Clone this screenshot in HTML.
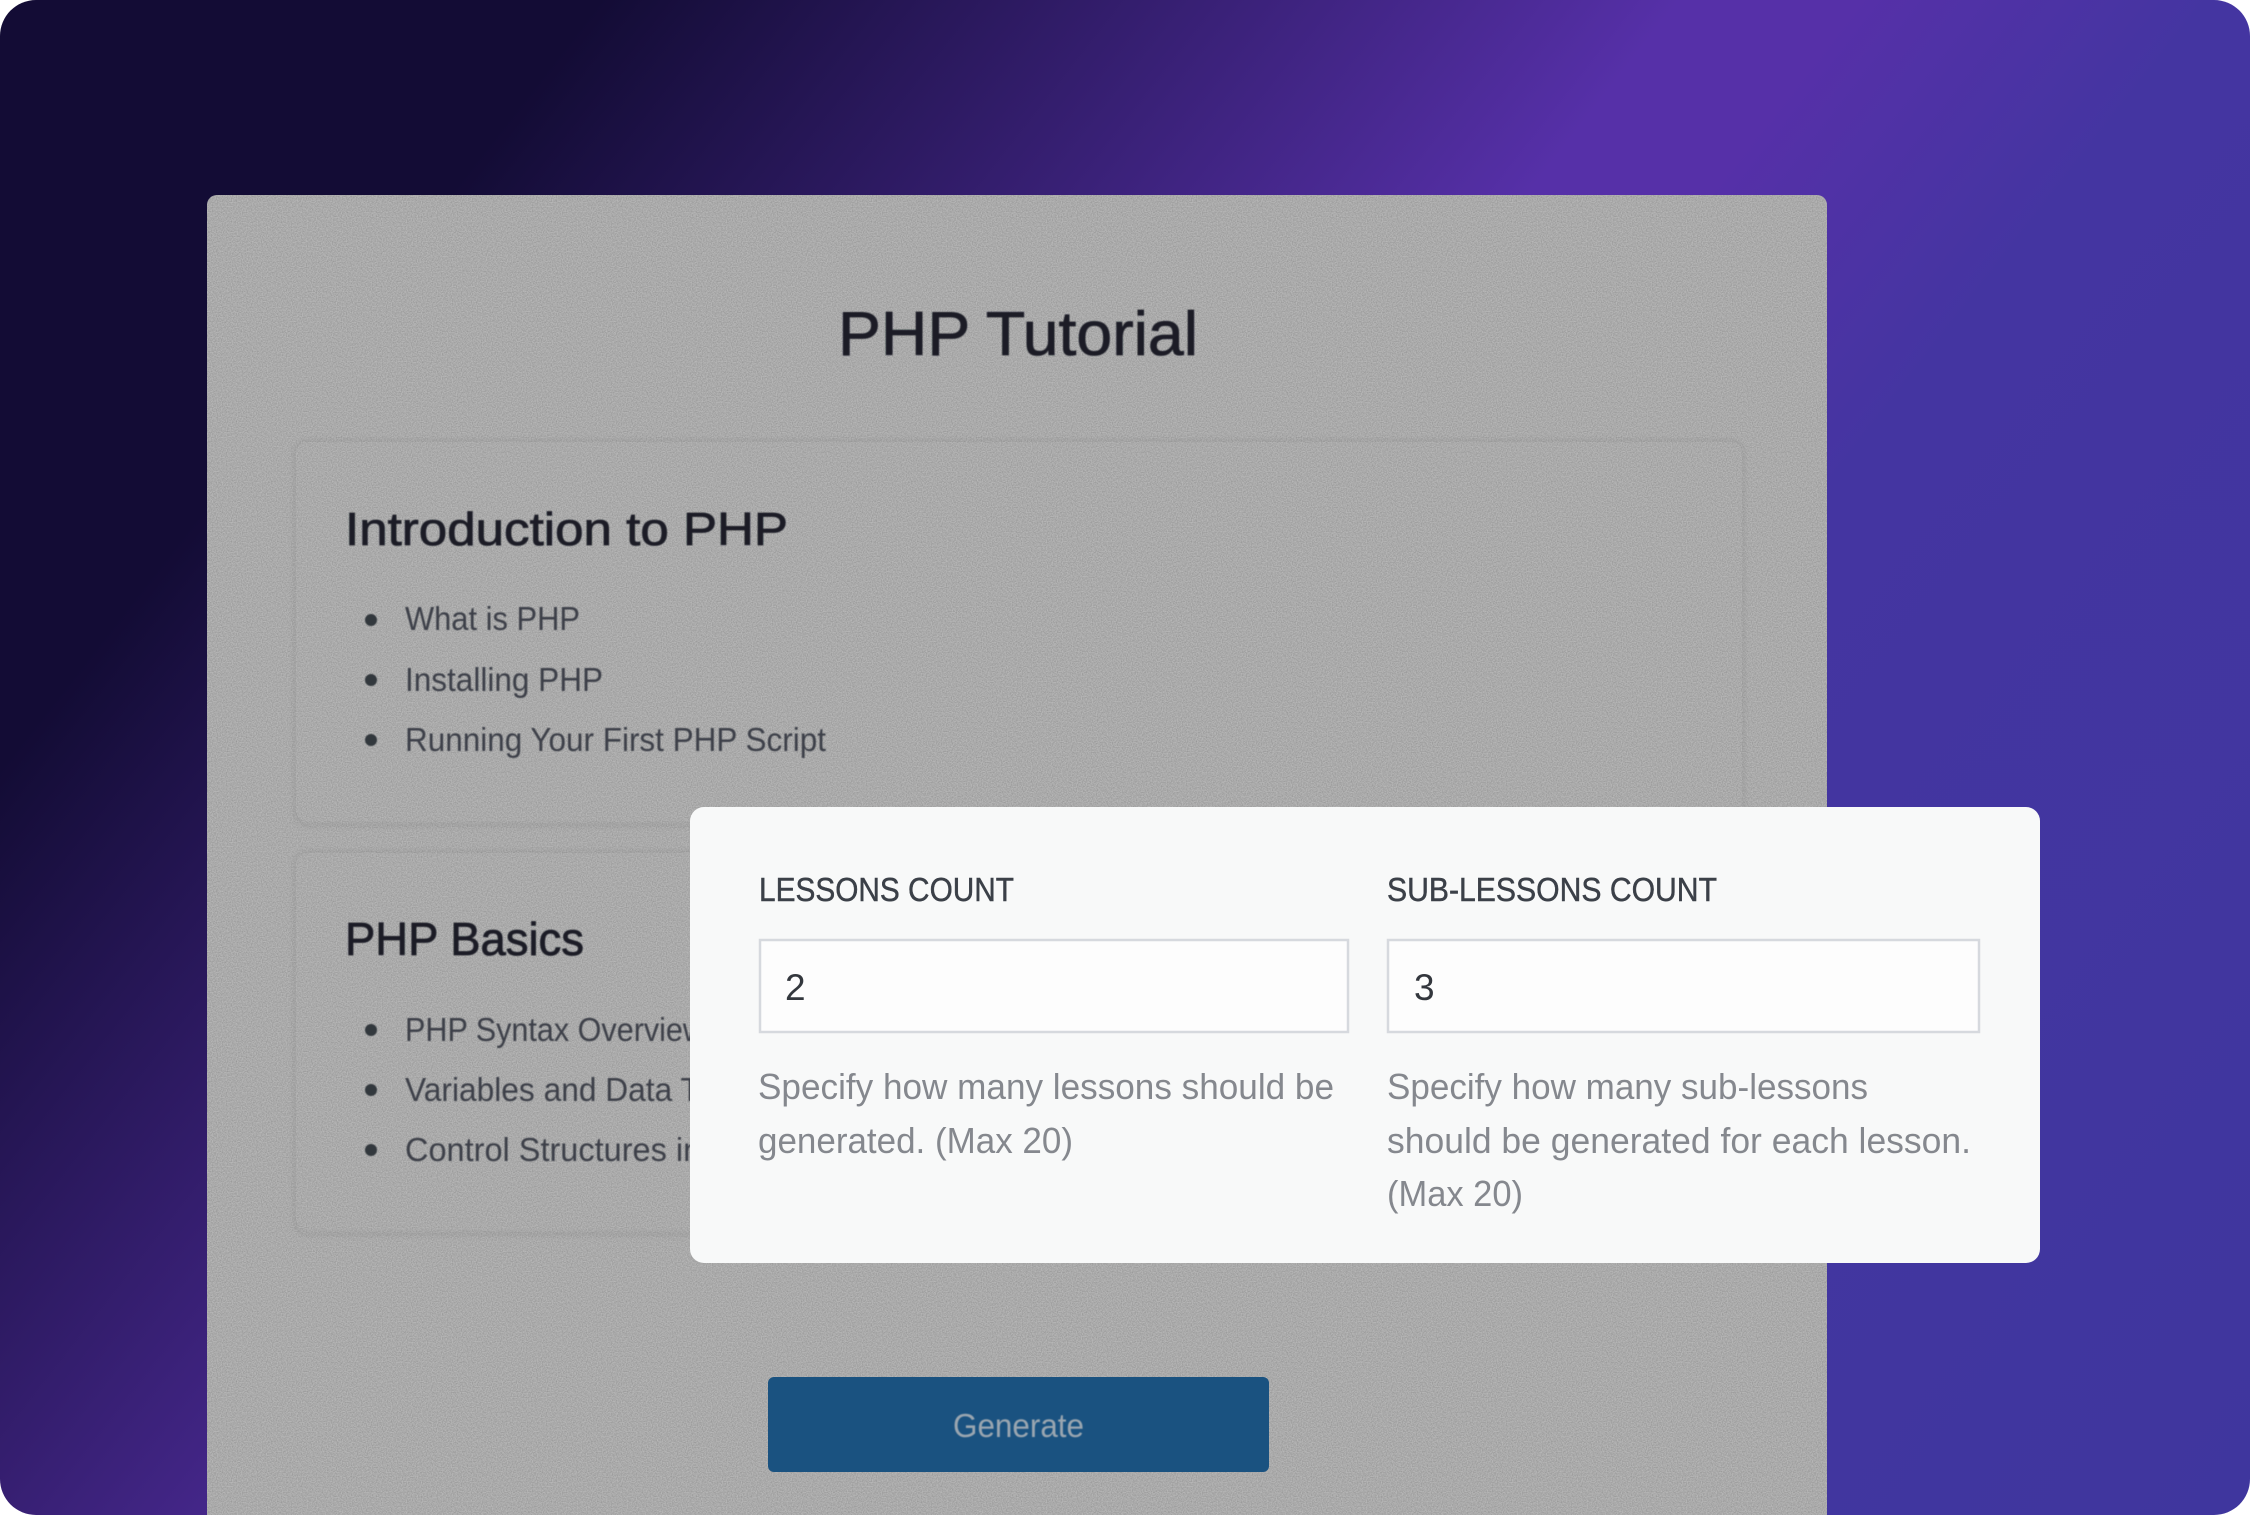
<!DOCTYPE html>
<html lang="en">
<head>
<meta charset="utf-8">
<title>PHP Tutorial</title>
<style>
html,body{margin:0;padding:0;width:2250px;height:1515px;background:#fff;overflow:hidden}
.frame{position:absolute;left:0;top:0;width:2250px;height:1515px;border-radius:36px;overflow:hidden;
background:linear-gradient(128deg,#130c35 0%,#130c35 17.5%,#5630a8 49%,#5630a8 54%,#4435a1 64.5%,#3f369e 100%)}
svg{position:absolute;left:0;top:0;display:block}
text{font-family:"Liberation Sans",sans-serif}
.h{stroke:currentColor;stroke-width:.8;paint-order:stroke}
.l{stroke:currentColor;stroke-width:.45;paint-order:stroke}
</style>
</head>
<body>
<div class="frame">
<svg width="2250" height="1515" viewBox="0 0 2250 1515" xmlns="http://www.w3.org/2000/svg">
<defs>
<filter id="noise" x="0" y="0" width="100%" height="100%" color-interpolation-filters="sRGB">
<feTurbulence type="fractalNoise" baseFrequency="0.8" numOctaves="2" seed="4"/>
<feColorMatrix type="matrix" values="0 1.5 0 0 -0.08  0 1.5 0 0 -0.08  0 1.5 0 0 -0.08  0 0 0 0 0.15"/>
</filter>
<filter id="soft" x="-5%" y="-5%" width="110%" height="110%"><feGaussianBlur stdDeviation="2.5"/></filter>
<filter id="tb" x="-5%" y="-20%" width="110%" height="140%"><feGaussianBlur stdDeviation="0.5"/></filter>
<clipPath id="cardclip"><rect x="207" y="195" width="1620" height="1340" rx="10"/></clipPath>
</defs>

<g clip-path="url(#cardclip)">
<rect x="207" y="195" width="1620" height="1340" fill="#aaaaaa"/>
<!-- sections -->
<rect x="295" y="441" width="1448" height="384" rx="12" fill="none" stroke="#949494" stroke-width="3" opacity=".75" filter="url(#soft)"/>
<rect x="295" y="852" width="1448" height="382" rx="12" fill="none" stroke="#949494" stroke-width="3" opacity=".75" filter="url(#soft)"/>
<rect x="296" y="442" width="1446" height="379" rx="11" fill="#aaaaaa"/>
<rect x="296" y="853" width="1446" height="376" rx="11" fill="#aaaaaa"/>
<rect x="207" y="195" width="1620" height="1340" filter="url(#noise)"/>

<g filter="url(#tb)">
<text class="h" x="838" y="355" font-size="62" color="#1b1f26" fill="#1b1f26" textLength="360" lengthAdjust="spacingAndGlyphs">PHP Tutorial</text>

<text class="h" x="345" y="545" font-size="46" color="#1b1f26" fill="#1b1f26" textLength="443" lengthAdjust="spacingAndGlyphs">Introduction to PHP</text>
<circle cx="371" cy="620" r="6" fill="#33373d"/>
<circle cx="371" cy="680" r="6" fill="#33373d"/>
<circle cx="371" cy="740" r="6" fill="#33373d"/>
<text x="405" y="630" font-size="33" fill="#3d4148" textLength="175" lengthAdjust="spacingAndGlyphs">What is PHP</text>
<text x="405" y="691" font-size="33" fill="#3d4148" textLength="198" lengthAdjust="spacingAndGlyphs">Installing PHP</text>
<text x="405" y="751" font-size="33" fill="#3d4148" textLength="421" lengthAdjust="spacingAndGlyphs">Running Your First PHP Script</text>

<text class="h" x="345" y="955" font-size="46" color="#1b1f26" fill="#1b1f26" textLength="239" lengthAdjust="spacingAndGlyphs">PHP Basics</text>
<circle cx="371" cy="1030" r="6" fill="#33373d"/>
<circle cx="371" cy="1090" r="6" fill="#33373d"/>
<circle cx="371" cy="1150" r="6" fill="#33373d"/>
<text x="405" y="1041" font-size="33" fill="#3d4148" textLength="300" lengthAdjust="spacingAndGlyphs">PHP Syntax Overview</text>
<text x="405" y="1101" font-size="33" fill="#3d4148" textLength="360" lengthAdjust="spacingAndGlyphs">Variables and Data Types</text>
<text x="405" y="1161" font-size="33" fill="#3d4148" textLength="372" lengthAdjust="spacingAndGlyphs">Control Structures in PHP</text>
</g>

<!-- button -->
<rect x="768" y="1377" width="501" height="95" rx="6" fill="#1a5280"/>
<text x="953" y="1437" font-size="33" fill="#9aa6b0" textLength="131" lengthAdjust="spacingAndGlyphs" filter="url(#tb)">Generate</text>
</g>

<!-- modal card -->
<rect x="690" y="807" width="1350" height="456" rx="14" fill="#f8f9f9"/>

<text class="l" x="759" y="901" font-size="33" color="#3b4048" fill="#3b4048" textLength="255" lengthAdjust="spacingAndGlyphs">LESSONS COUNT</text>
<text class="l" x="1387" y="901" font-size="33" color="#3b4048" fill="#3b4048" textLength="330" lengthAdjust="spacingAndGlyphs">SUB-LESSONS COUNT</text>

<rect x="760" y="940" width="588" height="92" fill="#fdfdfd" stroke="#d6d9de" stroke-width="2.5"/>
<rect x="1388" y="940" width="591" height="92" fill="#fdfdfd" stroke="#d6d9de" stroke-width="2.5"/>
<text x="785" y="1000" font-size="37" fill="#33373d">2</text>
<text x="1414" y="1000" font-size="37" fill="#33373d">3</text>

<g font-size="36" fill="#85888e">
<text x="758" y="1099" textLength="576" lengthAdjust="spacingAndGlyphs">Specify how many lessons should be</text>
<text x="758" y="1153" textLength="315" lengthAdjust="spacingAndGlyphs">generated. (Max 20)</text>
<text x="1387" y="1099" textLength="481" lengthAdjust="spacingAndGlyphs">Specify how many sub-lessons</text>
<text x="1387" y="1153" textLength="584" lengthAdjust="spacingAndGlyphs">should be generated for each lesson.</text>
<text x="1387" y="1206" textLength="136" lengthAdjust="spacingAndGlyphs">(Max 20)</text>
</g>
</svg>
</div>
</body>
</html>
